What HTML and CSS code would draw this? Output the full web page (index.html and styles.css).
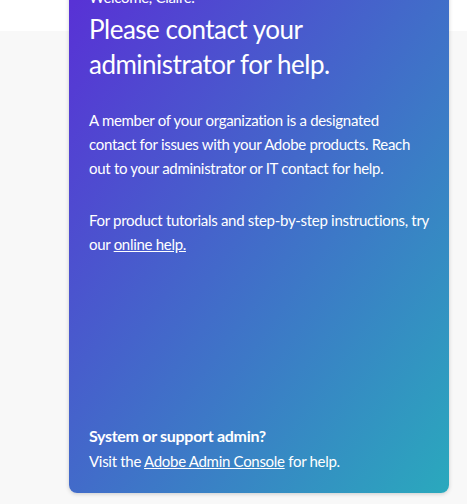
FILE: index.html
```html
<!DOCTYPE html>
<html lang="en">
<head>
<meta charset="utf-8">
<title>Contact your administrator</title>
<link rel="stylesheet" href="styles.css">
</head>
<body>
<main class="page">
  <section class="card">
    <div class="card-main">
      <p class="welcome">Welcome, Claire.</p>
      <h1 class="title">Please contact your administrator for help.</h1>
      <p class="text">A member of your organization is a designated contact for issues with your Adobe products. Reach out to your administrator or IT contact for help.</p>
      <p class="text text-gap">For product tutorials and step-by-step instructions, try our <a href="#" class="link">online help.</a></p>
    </div>
    <div class="card-foot">
      <p class="foot-title">System or support admin?</p>
      <p class="foot-text">Visit the <a href="#" class="link">Adobe Admin Console</a> for help.</p>
    </div>
  </section>
</main>
</body>
</html>
```

FILE: styles.css
```css
* { box-sizing: border-box; }
html, body { margin: 0; padding: 0; }
body {
  background: linear-gradient(#ffffff 0, #ffffff 31px, #f8f8f8 31px);
  min-height: 504px;
  font-family: Lato, "Open Sans", sans-serif;
  color: #fff;
  overflow: hidden;
}
.page {
  display: flex;
  padding-left: 69px;
}
.card {
  width: 380px;
  height: 528px;
  margin-top: -35px;
  padding: 20px;
  border-radius: 0 0 8px 8px;
  background: linear-gradient(to bottom right, #5a2dd6, #2aa9bd);
  box-shadow: 0 1px 4px rgba(0,0,0,0.18);
  display: flex;
  flex-direction: column;
  justify-content: space-between;
}
.card-main, .card-foot { display: flex; flex-direction: column; }
p, h1 { margin: 0; }
.welcome {
  font-size: 15px;
  line-height: 24px;
  margin-bottom: 3px;
  letter-spacing: -0.3px;
}
.title {
  font-weight: 400;
  font-size: 26px;
  line-height: 35px;
  margin-bottom: 26px;
  letter-spacing: -0.5px;
}
.text {
  font-size: 15px;
  line-height: 24px;
  letter-spacing: -0.3px;
}
.text-gap { margin-top: 28px; }
.link { color: #fff; text-decoration: underline; }
.foot-title {
  font-weight: 700;
  font-size: 16px;
  line-height: 24px;
  margin-bottom: 1px;
  letter-spacing: -0.3px;
}
.foot-text {
  font-size: 15px;
  line-height: 24px;
  letter-spacing: -0.3px;
}
```
